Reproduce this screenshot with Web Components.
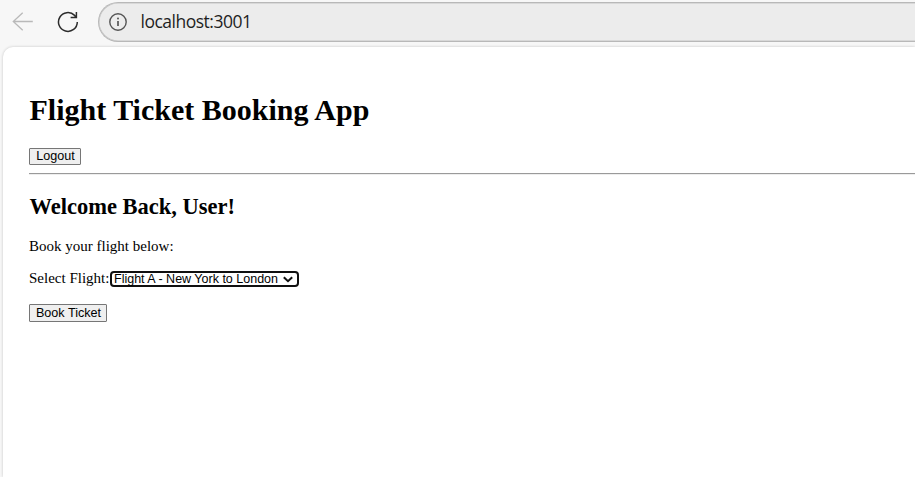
<!DOCTYPE html>
<html lang="en">
<head>
<meta charset="utf-8">
<title>Flight Ticket Booking App</title>
<style>
html, body { margin: 0; height: 100%; overflow: hidden; background: #f7f7f7; }
</style>
</head>
<body>
<browser-frame>
  <address-bar slot="bar">localhost:3001</address-bar>
  <booking-app>
    <app-button slot="logout">Logout</app-button>
    <flight-select slot="flight">Flight A - New York to London</flight-select>
    <app-button slot="book" style="--h:18px;--w:78px">Book Ticket</app-button>
  </booking-app>
</browser-frame>
<script>
const define = (name, html) => customElements.define(name, class extends HTMLElement {
  constructor() {
    super();
    this.attachShadow({ mode: 'open' }).innerHTML = html;
  }
});

define('browser-frame', `
<style>
:host { display: flex; flex-direction: column; height: 477px; width: 915px; overflow: hidden; background: #f7f7f7; }
main { flex: 1; margin-left: 3px; background: #fff; border-radius: 10px 0 0 0; box-shadow: 0 0 3px rgba(0,0,0,.2); }
</style>
<slot name="bar"></slot><main><slot></slot></main>`);

define('address-bar', `
<style>
:host { display: flex; height: 47px; box-sizing: border-box; padding: 2px 0 5px 12px; align-items: center; }
.back { margin-right: 23px; }
.reload { margin-right: 19px; }
svg { display: block; flex: none; fill: none; }
.field { flex: 1; height: 40px; box-sizing: border-box; display: flex; align-items: center; padding-left: 9px; margin-right: -2px;
  background: #ececec; border: 1px solid #b8b8b8; border-right: 0; border-radius: 20px 0 0 20px; box-shadow: inset 0 0 0 .5px #c4c4c4; }
.url { margin: 0 0 2px 12.5px; font: 17.5px/24px "Open Sans", sans-serif; color: #1f1f1f; letter-spacing: -.5px; white-space: nowrap; }
</style>
<svg class="back" width="22" height="22" viewBox="0 0 22 22" stroke="#b9b9b9" stroke-width="1.3"><path d="M20.8 10.5H1.5M10.7 1.7 1.3 10.5l9.4 8.8"/></svg>
<svg class="reload" width="22" height="22" viewBox="0 0 22 22" stroke="#2c2c2c" stroke-width="1.5"><path d="M20.3 11A9.4 9.4 0 1 1 17.6 4.4L19.4 6.4M19.4 1V6.6H13.6"/></svg>
<div class="field">
<svg width="20" height="20" viewBox="0 0 20 20" stroke="#555" stroke-width="1.4"><circle cx="10" cy="10" r="8.2"/><path d="M10 9v5" stroke-width="1.7"/><circle cx="10" cy="6.5" r="1" fill="#555" stroke="none"/></svg>
<span class="url"><slot></slot></span></div>`);

define('booking-app', `
<style>
:host { display: flex; flex-direction: column; padding: 43px 0 0 26px; color: #000; font: 15px/18px "Liberation Serif", serif; white-space: nowrap; }
h1 { margin: 0 0 18px; font-size: 30px; line-height: 40px; height: 40px; text-indent: .5px; }
hr { align-self: stretch; margin: 8px 0 18px; height: 2px; box-sizing: border-box; border: 0; border-top: 1px solid #9a9a9a; border-bottom: 1px solid #eee; }
h2 { margin: 0 0 16px; font-size: 22.5px; line-height: 28px; height: 28px; text-indent: .5px; }
p { margin: 0 0 14px; height: 18px; }
.row { display: flex; height: 18px; margin-bottom: 17px; }
label { width: 81px; }
</style>
<h1>Flight Ticket Booking App</h1>
<slot name="logout"></slot>
<hr>
<h2>Welcome Back, User!</h2>
<p>Book your flight below:</p>
<div class="row"><label>Select Flight:</label><slot name="flight"></slot></div>
<slot name="book"></slot>`);

define('app-button', `
<style>
:host { display: block; }
button { display: block; width: var(--w, 52px); height: var(--h, 17px); padding: 0 0 0 1px; border: 1px solid #767676; border-radius: 1px; background: #efefef; color: #000; font: 12.6px/15px "Liberation Sans", sans-serif; text-align: center; white-space: nowrap; }
</style>
<button><slot></slot></button>`);

define('flight-select', `
<style>
:host { display: flex; box-sizing: border-box; width: 189px; height: 16px; margin-top: 2px; padding: 0 4px 0 2px; justify-content: space-between; align-items: center;
 border: 2px solid #101010; border-radius: 4px; background: #fff; color: #000; font: 12.5px/14px "Liberation Sans", sans-serif; }
span { white-space: nowrap; }
</style>
<span><slot></slot></span>
<svg width="10" height="7" viewBox="0 0 10 7" fill="none" stroke="#101010" stroke-width="2"><path d="M.8 1.2 5 5.2 9.2 1.2"/></svg>`);
</script>
</body>
</html>
